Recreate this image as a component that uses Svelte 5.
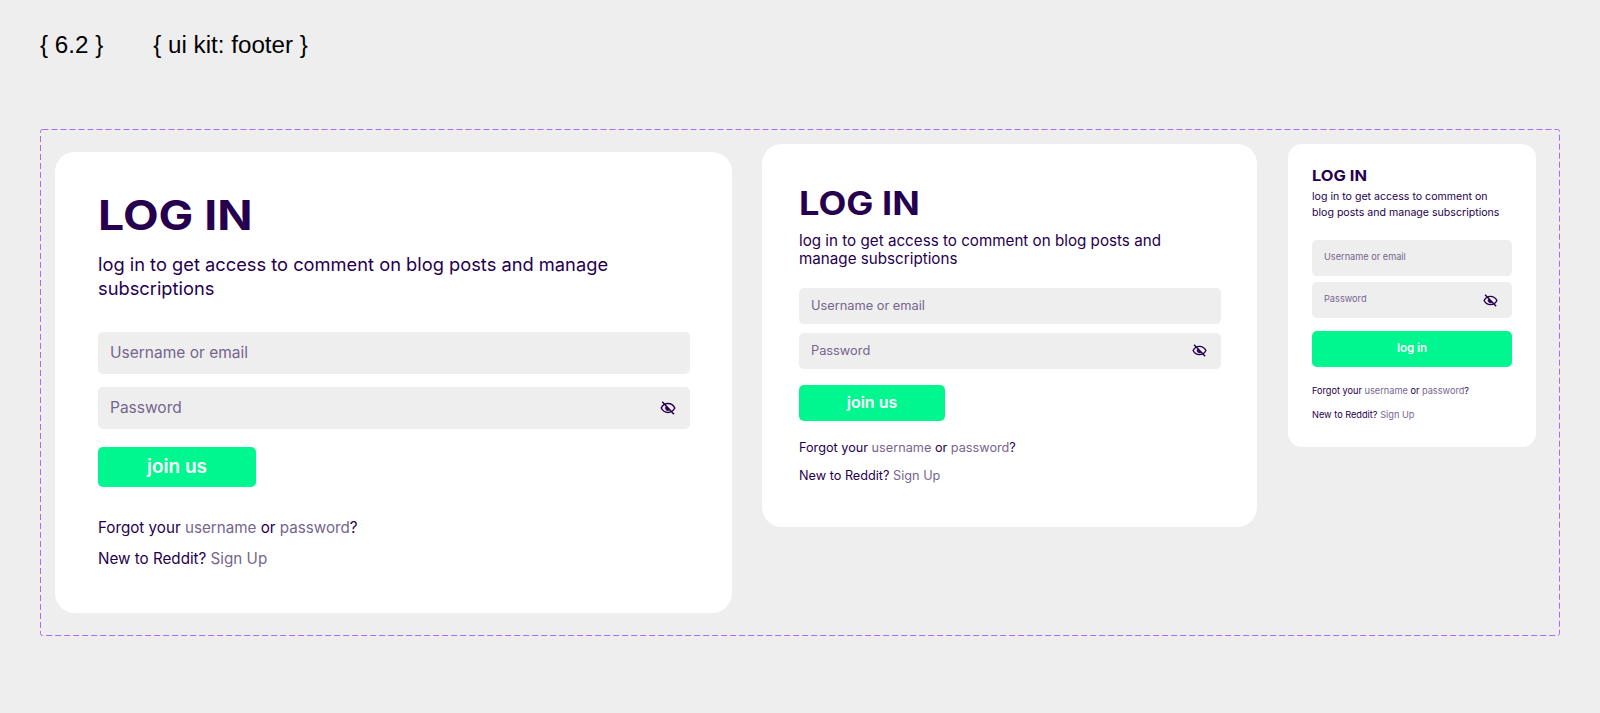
<script lang="ts">
  const cards = [
    { size: 'lg', action: 'join us', subtitle: ['log in to get access to comment on blog posts and manage', 'subscriptions'] },
    { size: 'md', action: 'join us', subtitle: ['log in to get access to comment on blog posts and', 'manage subscriptions'] },
    { size: 'sm', action: 'log in', subtitle: ['log in to get access to comment on', 'blog posts and manage subscriptions'] }
  ];
</script>

<main class="page">
  <header class="heading">
    <span>{'{ 6.2 }'}</span>
    <span>{'{ ui kit: footer }'}</span>
  </header>

  <section class="frame">
    <svg class="dashes" width="1520" height="507" aria-hidden="true">
      <rect x="0.5" y="0.5" width="1519" height="506" rx="2" />
    </svg>

    {#each cards as card}
      <form class="card {card.size}">
        <h1>LOG IN</h1>
        <p class="subtitle">
          {#each card.subtitle as line}
            <span>{line}</span>
          {/each}
        </p>

        <div class="field"><span>Username or email</span></div>
        <div class="field password">
          <span>Password</span>
          <svg class="eye" viewBox="0 0 16 16" fill="none" aria-hidden="true">
            <path d="M1.2 8C2.6 5.2 5 3.6 8 3.6S13.4 5.2 14.8 8C13.4 10.8 11 12.4 8 12.4S2.6 10.8 1.2 8Z" />
            <path class="pupil" d="M5.9 6.3A2.7 2.7 0 0 0 9.8 10Z" />
            <path d="M2.2 1.8 14 14.2" />
          </svg>
        </div>

        <button type="button">{card.action}</button>

        <p class="meta">Forgot your <a href="#username">username</a> or <a href="#password">password</a>?</p>
        <p class="meta">New to Reddit? <a href="#signup">Sign Up</a></p>
      </form>
    {/each}
  </section>
</main>

<style>
  :global(body) {
    margin: 0;
    background: #eeeeee;
  }

  .page {
    height: 713px;
    padding: 32px 40px 0;
    box-sizing: border-box;
    overflow: hidden;
  }

  .heading {
    display: flex;
    gap: 50px;
    height: 26px;
    font: 24.2px/26px "Liberation Sans", Arial, sans-serif;
    color: #000;
  }

  .frame {
    position: relative;
    display: flex;
    align-items: flex-start;
    width: 1520px;
    height: 507px;
    margin-top: 71px;
    padding: 15px 0 0 15px;
    box-sizing: border-box;
  }

  .dashes {
    position: absolute;
    left: 0;
    top: 0;
  }

  .dashes rect {
    fill: none;
    stroke: #a86cf5;
    stroke-dasharray: 6 3;
  }

  .card {
    box-sizing: border-box;
    background: #fff;
    color: #26004f;
    font-family: "Inter", "DejaVu Sans", sans-serif;
  }

  .card h1 {
    margin: 0;
    font-weight: 700;
    transform: scaleX(1.13);
    transform-origin: left center;
  }

  .subtitle {
    margin: 0;
  }

  .subtitle span {
    display: block;
    white-space: nowrap;
  }

  .field {
    display: flex;
    align-items: center;
    justify-content: space-between;
    box-sizing: border-box;
    background: #eeeeee;
    color: #75658f;
  }

  .eye {
    flex: none;
  }

  .eye path {
    stroke: #26004f;
    stroke-width: 1.5;
  }

  .eye .pupil {
    fill: #26004f;
    stroke-width: 0.5;
  }

  button {
    display: block;
    padding: 0 0 2px;
    border: 0;
    background: #00f68f;
    color: #fff;
    font-family: inherit;
    font-weight: 600;
  }

  .meta {
    margin: 0;
  }

  .meta a {
    color: #75658f;
    text-decoration: none;
  }

  /* large */
  .lg {
    width: 677px;
    height: 461px;
    margin: 8px 30px 0 0;
    padding: 41px 42px 0 43px;
    border-radius: 20px;
  }

  .lg h1 {
    font-size: 41px;
    line-height: 44px;
  }

  .lg .subtitle {
    margin: 15px 0 32px;
    font-size: 18.3px;
    line-height: 24px;
  }

  .lg .field {
    height: 42px;
    margin-bottom: 13px;
    padding: 0 14px 1px 12px;
    border-radius: 5px;
    font-size: 15.5px;
  }

  .lg .eye {
    width: 16px;
    height: 16px;
  }

  .lg button {
    width: 158px;
    height: 40px;
    margin: 18px 0 30px;
    border-radius: 5px;
    font-size: 19px;
  }

  .lg .meta {
    height: 31px;
    font-size: 15.2px;
    line-height: 22px;
  }

  /* medium */
  .md {
    width: 495px;
    height: 383px;
    margin-right: 31px;
    padding: 43px 36px 0 37px;
    border-radius: 20px;
  }

  .md h1 {
    font-size: 32px;
    line-height: 34px;
  }

  .md .subtitle {
    margin: 11px 0 20px;
    font-size: 15.2px;
    line-height: 18px;
  }

  .md .field {
    height: 36px;
    margin-bottom: 9px;
    padding: 0 14px 1px 12px;
    border-radius: 5px;
    font-size: 12.8px;
  }

  .md .eye {
    width: 15px;
    height: 15px;
  }

  .md button {
    width: 146px;
    height: 36px;
    margin: 16px 0 17px;
    border-radius: 5px;
    font-size: 16px;
  }

  .md .meta {
    height: 28px;
    font-size: 12.7px;
    line-height: 20px;
  }

  /* small */
  .sm {
    width: 248px;
    height: 303px;
    padding: 24px 24px 0;
    border-radius: 14px;
  }

  .sm h1 {
    font-size: 15px;
    line-height: 16px;
    transform: scaleX(1.1);
  }

  .sm .subtitle {
    margin: 5px 0 19px;
    font-size: 10.6px;
    line-height: 16px;
  }

  .sm .field {
    height: 36px;
    margin-bottom: 6px;
    padding: 0 14px 3px 12px;
    border-radius: 5px;
    font-size: 9.2px;
  }

  .sm .password {
    padding-bottom: 0;
  }

  .sm .password span {
    margin-bottom: 3px;
  }

  .sm .eye {
    width: 15px;
    height: 15px;
  }

  .sm button {
    width: 200px;
    height: 36px;
    margin: 13px 0 16px;
    border-radius: 5px;
    font-size: 11.5px;
  }

  .sm .meta {
    height: 24px;
    font-size: 9.2px;
    line-height: 16px;
  }
</style>
